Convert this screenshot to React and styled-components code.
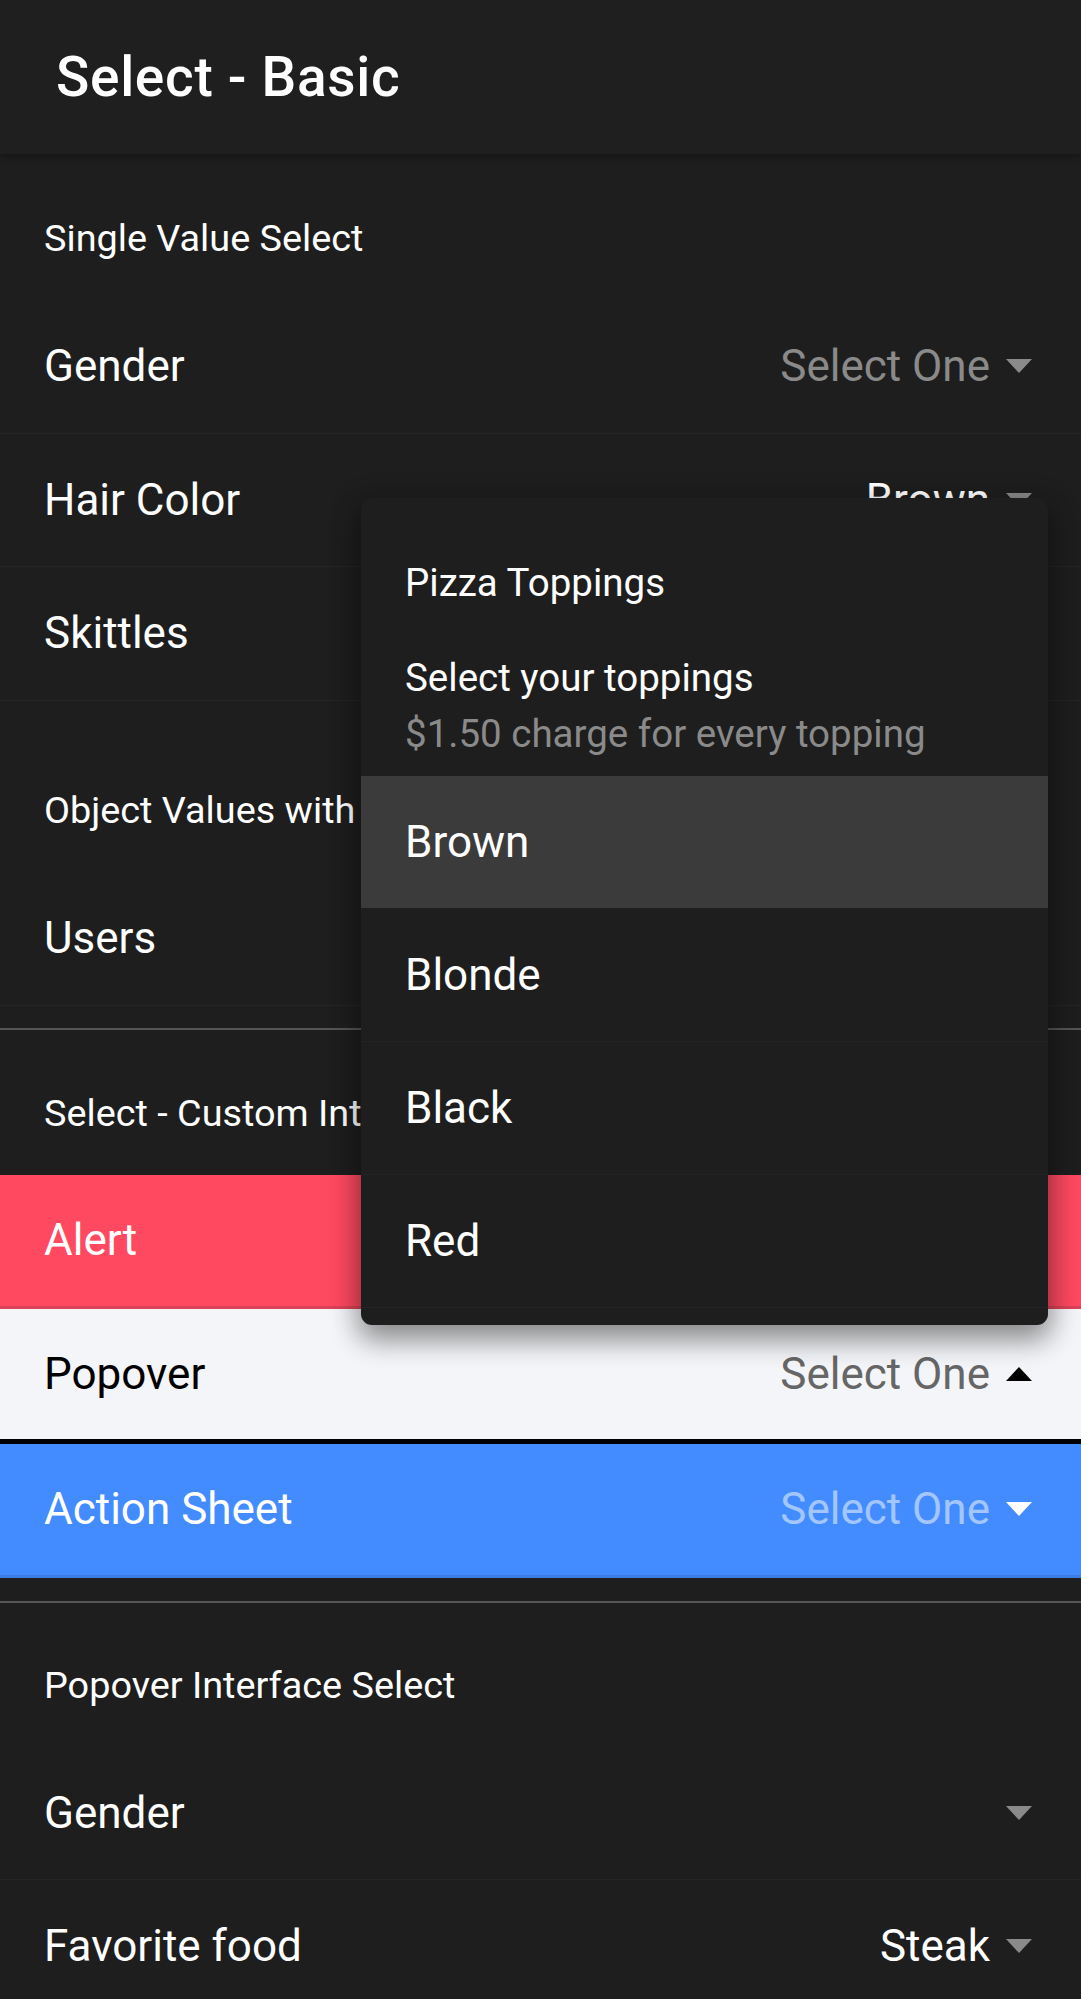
import React from 'react'
import styled, { createGlobalStyle, css } from 'styled-components'

const GlobalStyle = createGlobalStyle`
  html, body {
    margin: 0;
    padding: 0;
    background: #1e1e1e;
  }
  body {
    font-family: Roboto, 'Noto Sans', sans-serif;
    -webkit-font-smoothing: antialiased;
  }
`

const Page = styled.div`
  position: relative;
  width: 1081px;
  height: 1999px;
  background: #1e1e1e;
  overflow: hidden;
  color: #fff;
`

const Toolbar = styled.header`
  position: relative;
  z-index: 1;
  height: 154px;
  box-sizing: border-box;
  display: flex;
  align-items: center;
  padding: 0 56px;
  background: #1f1f1f;
  box-shadow: 0 2px 8px rgba(0, 0, 0, 0.35);
`

const Title = styled.h1`
  margin: 0;
  font-size: 55px;
  font-weight: 500;
  letter-spacing: 0.0125em;
  color: #fff;
`

const Section = styled.section`
  padding-top: ${props => props.$top}px;
`

const ListHeader = styled.div`
  height: 124px;
  display: flex;
  align-items: center;
  padding-left: 44px;
  font-size: 37.8px;
  color: #fff;
`

const Row = styled.div`
  height: ${props => props.$h || 133.5}px;
  box-sizing: border-box;
  display: flex;
  align-items: center;
  padding: 0 49px 0 44px;
  font-size: 44px;
  background: ${props => props.$bg || '#1e1e1e'};
  color: ${props => props.$fg || '#fff'};
  border-bottom: ${props => props.$border || '1.5px solid #252525'};
`

const Label = styled.span`
  flex: 1;
`

const Value = styled.span`
  color: ${props => props.$color};
`

const Arrow = styled.span`
  width: 0;
  height: 0;
  margin-left: 16px;
  border-left: 13px solid transparent;
  border-right: 13px solid transparent;
  ${props =>
    props.$up
      ? css`
          border-bottom: 14px solid ${props.$color};
        `
      : css`
          border-top: 14px solid ${props.$color};
        `}
`

const Divider = styled.hr`
  margin: ${props => props.$gap}px 0 0;
  border: 0;
  height: 1.5px;
  background: #555;
`

const Popover = styled.div`
  position: absolute;
  z-index: 2;
  top: 498px;
  left: 361px;
  width: 687px;
  height: 827px;
  box-sizing: border-box;
  border-radius: 11px;
  overflow: hidden;
  background: #1e1e1e;
  box-shadow: 0 14px 28px rgba(0, 0, 0, 0.3), 0 8px 30px 4px rgba(0, 0, 0, 0.22);
`

const PopoverHead = styled.div`
  padding: 62px 44px 20px;
  font-size: 38.5px;
`

const PopTitle = styled.div`
  line-height: 45px;
`

const SubHeader = styled.div`
  margin-top: 51px;
  line-height: 44px;
`

const Message = styled.div`
  margin-top: 12px;
  line-height: 44px;
  color: #8a8a8a;
`

const Option = styled.div`
  height: 133px;
  box-sizing: border-box;
  display: flex;
  align-items: center;
  padding-left: 44px;
  font-size: 44px;
  background: ${props => (props.$active ? '#3b3b3b' : 'transparent')};
  border-bottom: 1.5px solid ${props => (props.$active ? '#1e1e1e' : '#232323')};
`

const GRAY = '#8a8a8a'

const SelectRow = ({ label, value, valueColor = '#fff', arrowColor = GRAY, up, ...rest }) => (
  <Row {...rest}>
    <Label>{label}</Label>
    {value && <Value $color={valueColor}>{value}</Value>}
    <Arrow $color={arrowColor} $up={up} />
  </Row>
)

const toppings = ['Brown', 'Blonde', 'Black', 'Red']

export default function App() {
  return (
    <Page>
      <GlobalStyle />
      <Toolbar>
        <Title>Select - Basic</Title>
      </Toolbar>

      <Section $top={22}>
        <ListHeader>Single Value Select</ListHeader>
        <SelectRow label="Gender" value="Select One" valueColor={GRAY} />
        <SelectRow label="Hair Color" value="Brown" />
        <SelectRow label="Skittles" value="Red" />
      </Section>

      <Section $top={47.5}>
        <ListHeader>Object Values with trackBy</ListHeader>
        <SelectRow label="Users" value="Alice Smith" />
      </Section>

      <Divider $gap={22.5} />

      <Section $top={21}>
        <ListHeader>Select - Custom Interface Options</ListHeader>
        <SelectRow
          label="Alert"
          value="Bacon"
          $h={134}
          $bg="#ff4961"
          $border="3px solid #dc4257"
          arrowColor="#fff"
        />
        <SelectRow
          label="Popover"
          value="Select One"
          valueColor="#666"
          arrowColor="#000"
          up
          $h={135}
          $bg="#f4f5f8"
          $fg="#000"
          $border="5px solid #000"
        />
        <SelectRow
          label="Action Sheet"
          value="Select One"
          valueColor="#a3c6ff"
          arrowColor="#fff"
          $h={134}
          $bg="#428cff"
          $border="3px solid #3a7ee4"
        />
      </Section>

      <Divider $gap={23.5} />

      <Section $top={20}>
        <ListHeader>Popover Interface Select</ListHeader>
        <SelectRow label="Gender" />
        <SelectRow label="Favorite food" value="Steak" />
      </Section>

      <Popover>
        <PopoverHead>
          <PopTitle>Pizza Toppings</PopTitle>
          <SubHeader>Select your toppings</SubHeader>
          <Message>$1.50 charge for every topping</Message>
        </PopoverHead>
        {toppings.map(t => (
          <Option key={t} $active={t === 'Brown'}>
            {t}
          </Option>
        ))}
      </Popover>
    </Page>
  )
}
